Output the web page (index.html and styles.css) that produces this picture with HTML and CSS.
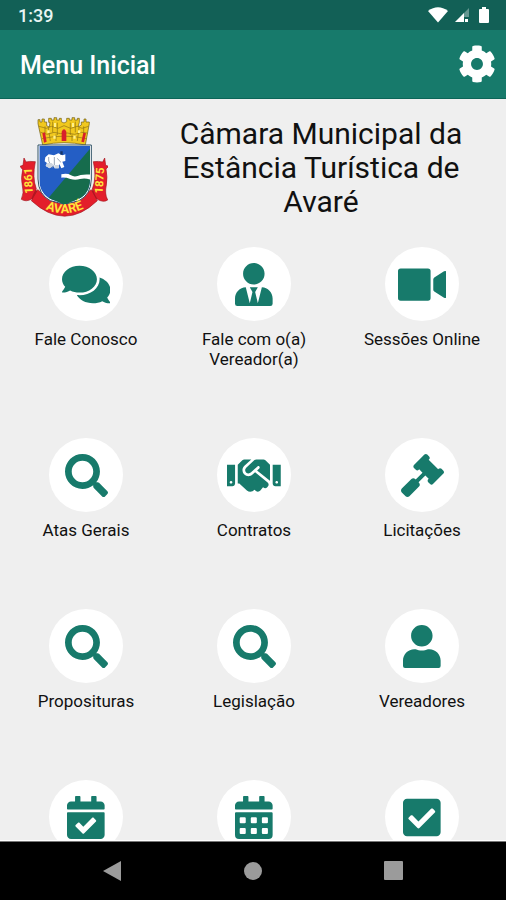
FILE: index.html
```html
<!DOCTYPE html>
<html lang="pt-BR">
<head>
<meta charset="utf-8">
<meta name="viewport" content="width=device-width, initial-scale=1">
<title>Menu Inicial</title>
<link rel="stylesheet" href="styles.css">
</head>
<body>
<div class="status">
  <span class="clock">1:39</span>
  <span class="signals">
    <svg width="20" height="16" viewBox="0 0 20 16" fill="#fff" aria-hidden="true"><path d="M0 4Q10-3.500 20 4L10 15.500z"/></svg>
    <svg width="16" height="16" viewBox="0 0 16 16" fill="#fff" aria-hidden="true"><path opacity=".35" d="M15 1v9H9v5H1z"/><path d="M10 6v9H1zM11 12h3v3h-3z"/></svg>
    <svg width="12" height="18" viewBox="0 0 12 18" fill="#fff" aria-hidden="true"><path d="M4 1h4v2h2q1 0 1 1v12q0 1-1 1H2q-1 0-1-1V4q0-1 1-1h2z"/></svg>
  </span>
</div>

<header class="appbar">
  <h1 class="appbar-title">Menu Inicial</h1>
  <button class="settings" type="button" aria-label="Configurações">
    <svg viewBox="0 0 512 512" fill="currentColor"><path d="M487.400 315.700l-42.600-24.600c4.300-23.200 4.300-47 0-70.200l42.600-24.600c4.900-2.800 7.100-8.600 5.500-14-11.100-35.600-30-67.800-54.700-94.600-3.800-4.100-10-5.100-14.800-2.300L380.800 110c-17.900-15.400-38.500-27.300-60.800-35.100V25.800c0-5.600-3.900-10.500-9.400-11.700-36.700-8.200-74.300-7.800-109.200 0-5.500 1.200-9.400 6.100-9.400 11.700V75c-22.200 7.900-42.800 19.800-60.800 35.100L88.700 85.500c-4.900-2.800-11-1.900-14.800 2.300-24.700 26.700-43.600 58.900-54.700 94.600-1.700 5.400.6 11.200 5.500 14L67.300 221c-4.300 23.200-4.300 47 0 70.200l-42.600 24.600c-4.900 2.800-7.100 8.600-5.500 14 11.100 35.600 30 67.800 54.700 94.600 3.800 4.100 10 5.100 14.800 2.300l42.600-24.600c17.900 15.400 38.500 27.300 60.800 35.100v49.200c0 5.600 3.900 10.500 9.400 11.700 36.700 8.200 74.300 7.800 109.200 0 5.500-1.200 9.400-6.100 9.400-11.700v-49.200c22.200-7.900 42.800-19.800 60.800-35.100l42.600 24.600c4.900 2.800 11 1.900 14.800-2.300 24.700-26.700 43.600-58.900 54.700-94.600 1.500-5.500-.7-11.300-5.600-14.100zM256 336c-44.100 0-80-35.900-80-80s35.900-80 80-80 80 35.900 80 80-35.900 80-80 80z"/></svg>
  </button>
</header>

<main class="content">
  <section class="entity">
    <svg class="crest" viewBox="30 36 264 300" role="img" aria-label="Brasão de Avaré">
      <defs>
        <clipPath id="shield"><path d="M88 123H240V222Q240 266 204 283Q180 291 164 300Q148 291 124 283Q88 266 88 222z"/></clipPath>
        <path id="motto" d="M82 298Q162 352 246 296"/>
      </defs>
      <!-- mural crown -->
      <path fill="#f1c81e" stroke="#6d5b14" stroke-width="2" d="M98 120L84 56V44H90V51H96V42H103V51H110V62L118 66L120 52H116V40H124V45H132V38H140V45H148V40H154V50L162 54L170 50V40H178V45H186V38H194V45H202V40H208V52L204 66L214 60V51H222V42H228V51H238V56L226 120Q162 106 98 120z"/>
      <path fill="none" stroke="#8d7115" stroke-width="2" d="M87 64L109 70L124 64L144 70L162 62L182 70L202 64L216 70L236 64M92 82L112 88L132 82L152 86L172 84L194 88L214 82L232 84M96 101Q162 86 230 101M128 50V82M142 53V90M181 53V90M196 50V82M115 68L121 108M207 68L202 108M105 64V86M221 64V86M138 88V108M186 88V108"/>
      <path fill="#fff08a" d="M132 54h6v12h-6zM186 54h6v12h-6zM112 76h7v8h-7zM204 76h7v8h-7zM130 92h7v9h-7zM190 92h7v9h-7z"/>
      <path fill="#d8202b" d="M155 108V80Q162 66 169 80V108zM97 85L105 82L110 110L102 113zM220 83L228 85L222 112L214 110z"/>
      <!-- ribbon -->
      <path fill="#b71923" stroke="#841018" stroke-width="2" d="M62 248L91 263L80 293L65 281zM265 247L235 264L246 292L262 279z"/>
      <path fill="#e31e2b" stroke="#a5161f" stroke-width="2" d="M42 159L48 171Q57 168 76 170Q66 218 79 252Q72 264 65 282Q48 292 34 283Q43 264 37 242Q32 219 38 194L30 184L39 181zM284 159L278 171Q267 168 250 170Q261 218 247 252Q252 268 261 282Q280 294 293 285Q283 266 289 240Q293 216 288 192L296 184L287 181z"/>
      <path fill="#e31e2b" stroke="#a5161f" stroke-width="2" d="M83 254Q160 322 244 254L262 287Q165 380 64 287z"/>
      <!-- shield -->
      <path fill="#fff" stroke="#315267" stroke-width="3" d="M84 120H244V222Q243 269 207 287Q181 294 164 297Q147 294 121 287Q85 269 84 222z"/>
      <g clip-path="url(#shield)">
        <path fill="#245ec5" d="M80 115H250V310H80z"/>
        <path fill="#166c4d" d="M250 119L112 283V310H250z"/>
        <path fill="#fff" d="M154 208Q172 204 183 211T212 210Q226 207 242 209V224Q225 218 210 222Q196 226 181 222Q168 217 154 218z"/>
        <path fill="#fff" d="M106 157L116 148L132 151L145 145L158 151L166 148V168L157 170L163 186L154 190L148 177L145 190H134L130 181L119 190L107 183L111 174L104 169z"/>
        <path fill="none" stroke="#9aa6b5" stroke-width="3" d="M116 156Q114 170 121 177M133 156V180M142 160Q148 168 153 172M125 187L133 183"/>
        <path fill="#cfd6df" d="M111 174h14l6 7-12 9-12-7zM134 180h13v10h-13z"/>
        <path fill="#153569" d="M151 139h7v10h-7z"/>
      </g>
      <g class="crest-text">
        <text class="motto"><textPath href="#motto" startOffset="50%">AVARÉ</textPath></text>
        <text transform="translate(67 227) rotate(-92)">1861</text>
        <text transform="translate(280 227) rotate(-86)">1875</text>
      </g>
    </svg>
    <h2 class="entity-name">Câmara Municipal da Estância Turística de Avaré</h2>
  </section>

  <nav class="menu" aria-label="Menu">
    <button class="item" type="button">
      <span class="disc"><svg viewBox="0 0 576 512"><path d="M416 192c0-88.400-93.100-160-208-160S0 103.600 0 192c0 34.300 14.100 65.900 38 92-13.400 30.200-35.500 54.200-35.800 54.500-2.200 2.300-2.800 5.700-1.500 8.700S4.800 352 8 352c36.600 0 66.900-12.300 88.700-25 32.200 15.700 70.300 25 111.300 25 114.900 0 208-71.600 208-160zm122 220c23.900-26 38-57.700 38-92 0-66.900-53.500-124.200-129.300-148.100.9 6.600 1.300 13.300 1.300 20.100 0 105.900-107.700 192-240 192-10.800 0-21.300-.8-31.700-1.900C207.800 439.600 281.800 480 368 480c41 0 79.100-9.200 111.300-25 21.800 12.700 52.100 25 88.700 25 3.200 0 6.100-1.900 7.300-4.800 1.300-2.900.7-6.300-1.500-8.700-.3-.3-22.400-24.200-35.800-54.500z"/></svg></span>
      <span class="label">Fale Conosco</span>
    </button>
    <button class="item" type="button">
      <span class="disc"><svg viewBox="0 0 448 512"><path d="M224 256c70.700 0 128-57.300 128-128S294.700 0 224 0 96 57.300 96 128s57.300 128 128 128zm95.800 32.600L272 480l-32-136 32-56h-96l32 56-32 136-47.800-191.400C56.900 292 0 350.300 0 422.400V484q0 28 28 28h392q28 0 28-28v-61.600c0-72.100-56.900-130.400-128.200-133.800z"/></svg></span>
      <span class="label">Fale com o(a) Vereador(a)</span>
    </button>
    <button class="item" type="button">
      <span class="disc"><svg viewBox="0 0 576 512"><path d="M32 64H356Q388 64 388 96V416Q388 448 356 448H32Q0 448 0 416V96Q0 64 32 64zM548 98Q576 88 576 108V404Q576 424 548 414L432 340Q420 330 420 318V194Q420 182 432 172z"/></svg></span>
      <span class="label">Sessões Online</span>
    </button>
    <button class="item" type="button">
      <span class="disc"><svg viewBox="0 0 512 512"><path d="M505 442.700L405.300 343c-4.500-4.500-10.600-7-17-7H372c27.600-35.300 44-79.700 44-128C416 93.100 322.900 0 208 0S0 93.100 0 208s93.100 208 208 208c48.300 0 92.700-16.400 128-44v16.300c0 6.400 2.500 12.500 7 17l99.700 99.700c9.400 9.400 24.600 9.400 33.900 0l28.300-28.300c9.400-9.400 9.400-24.600.1-34zM208 336c-70.700 0-128-57.200-128-128 0-70.700 57.200-128 128-128 70.700 0 128 57.200 128 128 0 70.700-57.200 128-128 128z"/></svg></span>
      <span class="label">Atas Gerais</span>
    </button>
    <button class="item" type="button">
      <span class="disc"><svg viewBox="0 0 640 512"><path d="M434.700 64h-85.900c-8 0-15.700 3-21.600 8.400l-98.300 90c-.1.100-.2.300-.3.400-16.600 15.600-16.300 40.500-2.100 56 12.700 13.900 39.400 17.600 56.100 2.700.1-.1.300-.1.400-.2l79.900-73.200c6.500-5.900 16.700-5.500 22.600 1 6 6.500 5.500 16.600-1 22.600l-26.100 23.900L504 313.800c2.900 2.400 5.500 5 7.900 7.700V128l-54.600-54.600c-5.900-6-14.100-9.400-22.600-9.400zM544 128.200v223.900c0 17.700 14.300 32 32 32h64V128.200h-96zm48 223.900c-8.800 0-16-7.200-16-16s7.200-16 16-16 16 7.200 16 16-7.200 16-16 16zM0 384h64c17.700 0 32-14.300 32-32V128.200H0V384zm48-63.900c8.800 0 16 7.200 16 16s-7.200 16-16 16-16-7.200-16-16c0-8.900 7.200-16 16-16zm435.900 18.600L334.600 217.500l-30 27.500c-29.700 27.100-75.200 24.500-101.700-4.400-26.900-29.400-24.800-74.900 4.400-101.700L289.100 64h-83.800c-8.500 0-16.600 3.400-22.600 9.400L128 128v223.900h18.300l90.500 81.900c27.400 22.300 67.700 18.100 90-9.300l.2-.2 17.900 15.500c15.900 13 39.400 10.500 52.300-5.400l31.400-38.600 5.400 4.400c13.700 11.100 33.900 9.100 45-4.700l9.500-11.700c11.200-13.800 9.100-33.900-4.600-45.100z"/></svg></span>
      <span class="label">Contratos</span>
    </button>
    <button class="item" type="button">
      <span class="disc"><svg viewBox="0 0 512 512"><path d="M504.971 199.362l-22.627-22.627c-9.373-9.373-24.569-9.373-33.941 0l-5.657 5.657L329.608 69.255l5.657-5.657c9.373-9.373 9.373-24.569 0-33.941L312.638 7.029c-9.373-9.373-24.569-9.373-33.941 0L154.246 131.480c-9.373 9.373-9.373 24.569 0 33.941l22.627 22.627c9.373 9.373 24.569 9.373 33.941 0l5.657-5.657 39.598 39.598-81.040 81.040-5.657-5.657c-12.497-12.497-32.758-12.497-45.255 0L9.373 412.118c-12.497 12.497-12.497 32.758 0 45.255l45.255 45.255c12.497 12.497 32.758 12.497 45.255 0l114.745-114.745c12.497-12.497 12.497-32.758 0-45.255l-5.657-5.657 81.040-81.040 39.598 39.598-5.657 5.657c-9.373 9.373-9.373 24.569 0 33.941l22.627 22.627c9.373 9.373 24.569 9.373 33.941 0l124.451-124.451c9.372-9.372 9.372-24.568 0-33.941z"/></svg></span>
      <span class="label">Licitações</span>
    </button>
    <button class="item" type="button">
      <span class="disc"><svg viewBox="0 0 512 512"><path d="M505 442.700L405.300 343c-4.500-4.500-10.600-7-17-7H372c27.600-35.300 44-79.700 44-128C416 93.100 322.900 0 208 0S0 93.100 0 208s93.100 208 208 208c48.300 0 92.700-16.400 128-44v16.300c0 6.400 2.500 12.500 7 17l99.700 99.700c9.400 9.400 24.600 9.400 33.900 0l28.300-28.300c9.400-9.400 9.400-24.600.1-34zM208 336c-70.700 0-128-57.200-128-128 0-70.700 57.200-128 128-128 70.700 0 128 57.200 128 128 0 70.700-57.200 128-128 128z"/></svg></span>
      <span class="label">Proposituras</span>
    </button>
    <button class="item" type="button">
      <span class="disc"><svg viewBox="0 0 512 512"><path d="M505 442.700L405.300 343c-4.500-4.500-10.600-7-17-7H372c27.600-35.300 44-79.700 44-128C416 93.100 322.900 0 208 0S0 93.100 0 208s93.100 208 208 208c48.300 0 92.700-16.400 128-44v16.300c0 6.400 2.500 12.500 7 17l99.700 99.700c9.400 9.400 24.600 9.400 33.900 0l28.300-28.300c9.400-9.400 9.400-24.600.1-34zM208 336c-70.700 0-128-57.200-128-128 0-70.700 57.200-128 128-128 70.700 0 128 57.200 128 128 0 70.700-57.200 128-128 128z"/></svg></span>
      <span class="label">Legislação</span>
    </button>
    <button class="item" type="button">
      <span class="disc"><svg viewBox="0 0 448 512"><path d="M224 256c70.700 0 128-57.300 128-128S294.700 0 224 0 96 57.300 96 128s57.300 128 128 128zm89.600 32h-16.700c-22.200 10.200-46.900 16-72.900 16s-50.600-5.800-72.900-16h-16.700C60.200 288 0 348.200 0 422.400V488q0 24 24 24h400q24 0 24-24v-65.600c0-74.200-60.200-134.400-134.400-134.400z"/></svg></span>
      <span class="label">Vereadores</span>
    </button>
    <button class="item" type="button" aria-label="Agenda">
      <span class="disc"><svg viewBox="0 0 448 512"><path d="M436 160H12c-6.627 0-12-5.373-12-12v-36c0-26.510 21.490-48 48-48h48V12c0-6.627 5.373-12 12-12h40c6.627 0 12 5.373 12 12v52h128V12c0-6.627 5.373-12 12-12h40c6.627 0 12 5.373 12 12v52h48c26.510 0 48 21.490 48 48v36c0 6.627-5.373 12-12 12zM12 192h424c6.627 0 12 5.373 12 12v260c0 26.510-21.490 48-48 48H48c-26.510 0-48-21.490-48-48V204c0-6.627 5.373-12 12-12zm333.296 95.947l-28.169-28.398c-4.667-4.705-12.265-4.736-16.970-.068L194.120 364.665l-45.980-46.352c-4.667-4.705-12.266-4.736-16.971-.068l-28.397 28.170c-4.705 4.667-4.736 12.265-.068 16.970l82.601 83.269c4.667 4.705 12.265 4.736 16.970.068l142.953-141.805c4.705-4.667 4.736-12.265.068-16.970z"/></svg></span>
    </button>
    <button class="item" type="button" aria-label="Calendário">
      <span class="disc"><svg viewBox="0 0 448 512"><path fill-rule="evenodd" d="M436 160H12c-6.627 0-12-5.373-12-12v-36c0-26.510 21.490-48 48-48h48V12c0-6.627 5.373-12 12-12h40c6.627 0 12 5.373 12 12v52h128V12c0-6.627 5.373-12 12-12h40c6.627 0 12 5.373 12 12v52h48c26.510 0 48 21.490 48 48v36c0 6.627-5.373 12-12 12zM12 192h424q12 0 12 12v260q0 48-48 48H48q-48 0-48-48V204q0-12 12-12zM68 252q-12 0-12 12v48q0 12 12 12h48q12 0 12-12v-48q0-12-12-12zM200 252q-12 0-12 12v48q0 12 12 12h48q12 0 12-12v-48q0-12-12-12zM332 252q-12 0-12 12v48q0 12 12 12h48q12 0 12-12v-48q0-12-12-12zM68 380q-12 0-12 12v48q0 12 12 12h48q12 0 12-12v-48q0-12-12-12zM200 380q-12 0-12 12v48q0 12 12 12h48q12 0 12-12v-48q0-12-12-12zM332 380q-12 0-12 12v48q0 12 12 12h48q12 0 12-12v-48q0-12-12-12z"/></svg></span>
    </button>
    <button class="item" type="button" aria-label="Votações">
      <span class="disc"><svg viewBox="0 0 448 512"><path d="M400 480H48c-26.510 0-48-21.490-48-48V80c0-26.510 21.490-48 48-48h352c26.510 0 48 21.490 48 48v352c0 26.510-21.490 48-48 48zm-204.686-98.059l184-184c6.248-6.248 6.248-16.379 0-22.627l-22.627-22.627c-6.248-6.248-16.379-6.249-22.628 0L184 302.745l-70.059-70.059c-6.248-6.248-16.379-6.248-22.628 0l-22.627 22.627c-6.248 6.248-6.248 16.379 0 22.627l104 104c6.249 6.250 16.379 6.250 22.628.001z"/></svg></span>
    </button>
  </nav>
</main>

<footer class="sysnav">
  <button type="button" aria-label="Voltar"><svg width="20" height="20" viewBox="0 0 20 20"><path d="M0 10L18 0V20z"/></svg></button>
  <button type="button" aria-label="Início"><svg width="20" height="20" viewBox="0 0 20 20"><circle cx="10" cy="10" r="9"/></svg></button>
  <button type="button" aria-label="Recentes"><svg width="20" height="20" viewBox="0 0 20 20"><rect x="1" width="19" height="19" rx="1"/></svg></button>
</footer>
</body>
</html>
```
FILE: styles.css
```css
* {
  box-sizing: border-box;
}

body {
  margin: 0;
  height: 100vh;
  display: flex;
  flex-direction: column;
  background: #efefef;
  color: #111;
  font-family: Roboto, sans-serif;
}

button {
  padding: 0;
  border: 0;
  background: none;
  color: inherit;
  font: inherit;
  cursor: pointer;
}

.status {
  flex: none;
  height: 30px;
  padding: 0 16px 0 18px;
  display: flex;
  align-items: center;
  justify-content: space-between;
  background: #126056;
  color: #e8f5f3;
}

.clock {
  font-size: 18px;
  font-weight: 500;
  line-height: 20px;
  padding-top: 2px;
}

.signals {
  display: flex;
  align-items: center;
  gap: 4px;
}

.signals svg:first-child {
  margin-right: 2px;
}

.signals svg:last-child {
  margin-left: 4px;
}

.appbar {
  flex: none;
  height: 69px;
  padding: 0 10px 0 20px;
  display: flex;
  align-items: center;
  justify-content: space-between;
  background: #177a6b;
  border-bottom: 1px solid #0c6558;
  color: #fff;
}

.appbar-title {
  margin: 0;
  padding-top: 4px;
  font-size: 25px;
  font-weight: 500;
  line-height: 32px;
}

.settings,
.settings svg {
  display: block;
  width: 38px;
  height: 38px;
}

.content {
  flex: 1;
  min-height: 0;
  overflow-y: auto;
  scrollbar-width: none;
}

.entity {
  display: flex;
  gap: 48px;
  padding: 18px 20px 28px;
}

.crest {
  flex: none;
  width: 88px;
  height: 100px;
}

.crest-text {
  fill: #ffe43b;
  font-size: 34px;
  font-weight: 700;
  text-anchor: middle;
}

.motto {
  font-size: 38px;
}

.entity-name {
  flex: 1;
  margin: 0;
  font-size: 30px;
  font-weight: 400;
  line-height: 34px;
  text-align: center;
}

.menu {
  display: grid;
  grid-template-columns: repeat(3, 1fr);
  align-items: start;
  row-gap: 69px;
  padding: 0 0 69px 2px;
}

.item {
  display: flex;
  flex-direction: column;
  align-items: center;
  gap: 8px;
}

.disc {
  display: flex;
  align-items: center;
  justify-content: center;
  width: 74px;
  height: 74px;
  border-radius: 50%;
  background: #fff;
}

.disc svg {
  display: block;
  height: 43px;
  fill: #177a6b;
}

.label {
  padding: 0 16px;
  font-size: 17px;
  line-height: 20px;
  text-align: center;
}

.sysnav {
  flex: none;
  height: 60px;
  display: flex;
  align-items: center;
  justify-content: center;
  gap: 120px;
  border-top: 1px solid #fff;
  background: #000;
  box-shadow: inset 0 1px #777;
  fill: #9b9b9b;
}

.sysnav button,
.sysnav svg {
  display: block;
}
```
